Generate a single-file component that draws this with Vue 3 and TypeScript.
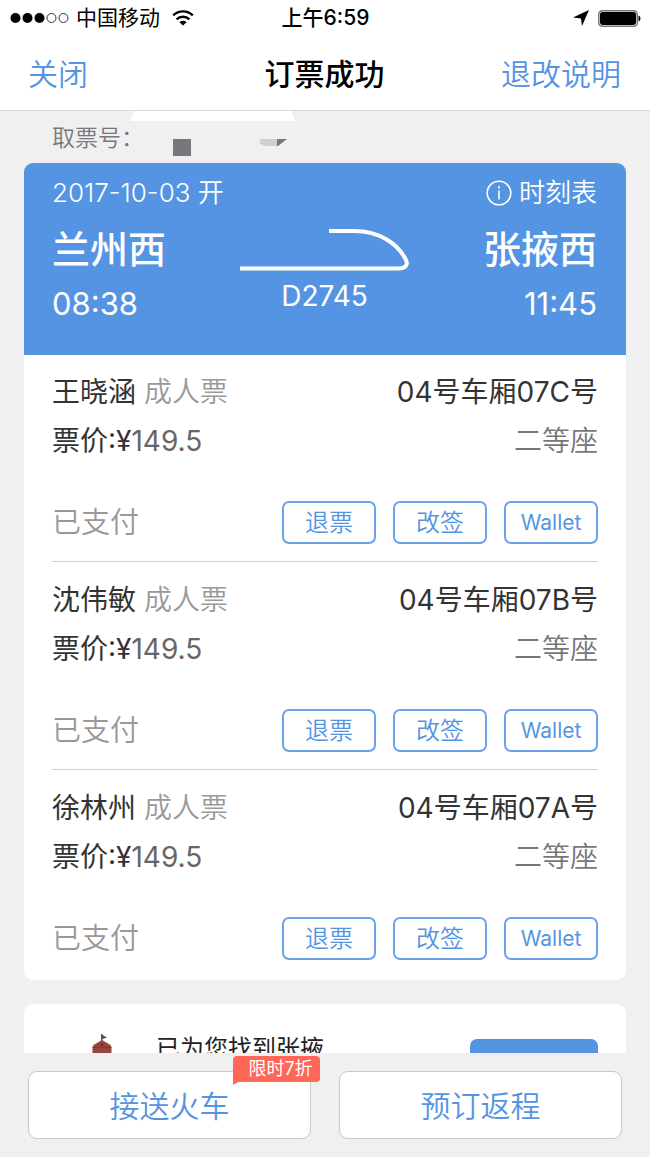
<script setup lang="ts">
interface Ticket {
  name: string
  kind: string
  seat: string
  seatClass: string
  price: string
  status: string
}

const tickets: Ticket[] = [
  { name: '王晓涵', kind: '成人票', seat: '04号车厢07C号', seatClass: '二等座', price: '149.5', status: '已支付' },
  { name: '沈伟敏', kind: '成人票', seat: '04号车厢07B号', seatClass: '二等座', price: '149.5', status: '已支付' },
  { name: '徐林州', kind: '成人票', seat: '04号车厢07A号', seatClass: '二等座', price: '149.5', status: '已支付' },
]
</script>

<template>
  <div class="screen">
    <div class="status">
      <div class="carrier">
        <svg class="signal" width="60" height="12" viewBox="0 0 60 12" aria-hidden="true">
          <circle cx="5.5" cy="6" r="5" />
          <circle cx="17.5" cy="6" r="5" />
          <circle cx="29.5" cy="6" r="5" />
          <circle class="off" cx="41.5" cy="6" r="4.5" />
          <circle class="off" cx="53.5" cy="6" r="4.5" />
        </svg>
        <span>中国移动</span>
        <svg class="wifi" width="22" height="16" viewBox="0 0 22 16" aria-hidden="true">
          <path d="M1.2 5.400a14 14 0 0 1 19.6 0M4.6 9.300a9.2 9.2 0 0 1 12.8 0" />
          <path class="dot" d="M11 15.6 7.4 12.2a5.2 5.2 0 0 1 7.2 0z" />
        </svg>
      </div>
      <span class="clock">上午6:59</span>
      <div class="power">
        <svg width="16" height="16" viewBox="0 0 16 16" aria-hidden="true">
          <path d="M16 0 9 16 8 8.500 0 7.500z" />
        </svg>
        <svg width="43" height="17" viewBox="0 0 43 17" aria-hidden="true">
          <rect class="case" x=".75" y=".75" width="38.5" height="15.5" rx="3.5" />
          <rect x="2" y="2" width="36" height="13" rx="2.4" />
          <path d="M40.5 5.5c2.6.8 2.6 5.2 0 6z" />
        </svg>
      </div>
    </div>

    <header class="nav">
      <button type="button" class="link">关闭</button>
      <h1>订票成功</h1>
      <button type="button" class="link">退改说明</button>
    </header>

    <main class="content">
      <div class="pickup">
        <span>取票号：</span>
        <svg class="mask" width="166" height="48" viewBox="0 0 166 48" aria-hidden="true">
          <path d="M5-1h156l4 11H0z" fill="#fff" />
          <path d="M43 28h18v17H43z" fill="#77777c" />
          <path d="M130 28h17v7h-9q-4 0-8-2z" fill="#d0d0d3" />
          <path d="M147 28h10l-9 7h-1z" fill="#77777c" />
        </svg>
      </div>

      <section class="card">
        <div class="trip">
          <div class="trip-top">
            <span>2017-10-03 开</span>
            <button type="button" class="timetable">
              <svg width="26" height="26" viewBox="0 0 26 26" aria-hidden="true">
                <circle cx="13" cy="13" r="11.8" />
                <path d="M13 10.5v9" />
                <path d="M13 6v2.4" />
              </svg>
              <span>时刻表</span>
            </button>
          </div>
          <div class="route">
            <div class="stop">
              <strong>兰州西</strong>
              <time>08:38</time>
            </div>
            <div class="train">
              <svg width="170" height="44" viewBox="0 0 170 44" aria-hidden="true">
                <path d="M89 3h25C140 3 158 16 166 32c2.500 5-1 8.500-7 8.500H0" />
              </svg>
              <span>D2745</span>
            </div>
            <div class="stop end">
              <strong>张掖西</strong>
              <time>11:45</time>
            </div>
          </div>
        </div>

        <ul class="tickets">
          <li v-for="t in tickets" :key="t.seat" class="ticket">
            <div class="line">
              <span>{{ t.name }} <span class="kind">{{ t.kind }}</span></span>
              <span>{{ t.seat }}</span>
            </div>
            <div class="line">
              <span>票价:¥<span class="price">{{ t.price }}</span></span>
              <span class="class">{{ t.seatClass }}</span>
            </div>
            <div class="actions">
              <span class="paid">{{ t.status }}</span>
              <button type="button">退票</button>
              <button type="button">改签</button>
              <button type="button" class="wallet">Wallet</button>
            </div>
          </li>
        </ul>
      </section>

      <section class="card offer">
        <svg width="20" height="44" viewBox="0 0 20 44" aria-hidden="true">
          <path d="M9 0h1.500v1L15 3.500l-4.500 1.500v3H9z" fill="#62484a" />
          <path d="M10 6 18.500 11l1 2v31H.5V13l1-2z" fill="#954641" />
          <path d="M.5 13.500h19" stroke="#7c3c39" stroke-width="1" />
          <circle cx="10" cy="10.500" r="1.500" fill="#6c3735" />
        </svg>
        <p>已为您找到张掖</p>
        <button type="button" aria-label="查看"></button>
      </section>
    </main>

    <footer class="bar">
      <button type="button">接送火车
        <span class="badge">限时7折</span>
      </button>
      <button type="button">预订返程</button>
    </footer>
  </div>
</template>

<style>
body {
  margin: 0;
}
</style>

<style scoped>
.screen {
  display: flex;
  flex-direction: column;
  height: 100vh;
  background: #f0f0f1;
  color: #333;
  font-family: Inter, "Noto Sans CJK SC", sans-serif;
  font-size: 28px;
}
button {
  font: inherit;
  margin: 0;
  padding: 0;
  border: 0;
  background: none;
  color: #5594e3;
  cursor: pointer;
}
svg {
  display: block;
  flex: none;
}
.status {
  display: grid;
  grid-template-columns: 1fr auto 1fr;
  align-items: center;
  height: 36px;
  padding: 0 9px 0 10px;
  background: #fff;
  color: #000;
  font-size: 21px;
  line-height: 36px;
}
.carrier,
.power {
  display: flex;
  align-items: center;
}
.carrier {
  gap: 6px;
}
.signal .off {
  fill: none;
  stroke: #333;
}
.wifi {
  margin-left: 6px;
}
.wifi path {
  fill: none;
  stroke: #000;
  stroke-width: 2.4;
}
.wifi .dot {
  fill: #000;
  stroke: none;
}
.clock {
  font-weight: 500;
}
.power {
  justify-content: flex-end;
  gap: 9px;
}
.case {
  fill: #fff;
  stroke: #777;
  stroke-width: 1.5;
}
.nav {
  display: grid;
  grid-template-columns: 1fr auto 1fr;
  align-items: center;
  height: 72px;
  padding: 0 29px 2px 28px;
  background: #fff;
  border-bottom: 1px solid #d8d8d8;
  font-size: 30px;
}
.nav h1 {
  margin: 0;
  color: #000;
  font-size: 30px;
  font-weight: 500;
}
.link {
  justify-self: start;
  font-weight: 350;
}
.link:last-child {
  justify-self: end;
}
.content {
  flex: 1;
  min-height: 0;
  overflow: hidden;
  padding: 0 24px;
}
.pickup {
  position: relative;
  height: 52px;
  padding-left: 28px;
  color: #77777c;
  font-size: 23px;
  font-weight: 350;
  line-height: 54px;
}
.mask {
  position: absolute;
  left: 106px;
  top: 0;
}
.card {
  overflow: hidden;
  border-radius: 9px;
  background: #fff;
}
.trip {
  padding: 12px 29px 34px 28px;
  background: #5594e3;
  color: #fff;
}
.trip-top {
  display: flex;
  justify-content: space-between;
  align-items: center;
  height: 36px;
  font-size: 26px;
  font-weight: 350;
  line-height: 36px;
}
.timetable {
  display: flex;
  align-items: center;
  gap: 7px;
  color: #fff;
}
.timetable path,
.timetable circle {
  fill: none;
  stroke: #fff;
  stroke-width: 1.6;
}
.route {
  display: grid;
  grid-template-columns: 1fr 170px 1fr;
}
.stop {
  display: flex;
  flex-direction: column;
}
.stop strong {
  font-size: 38px;
  font-weight: 500;
  line-height: 76px;
}
.stop time {
  font-size: 31px;
  font-weight: 400;
  line-height: 34px;
}
.end {
  align-items: flex-end;
}
.train {
  display: flex;
  flex-direction: column;
  align-items: center;
  padding-top: 17px;
  line-height: 48px;
}
.train path {
  fill: none;
  stroke: #fff;
  stroke-width: 4;
}
.tickets {
  margin: 0;
  padding: 0 28px;
  list-style: none;
}
.ticket {
  padding: 17px 0;
  border-bottom: 1px solid #d0d0d0;
}
.ticket + .ticket {
  padding-top: 18px;
}
.ticket:last-child {
  padding-bottom: 20px;
  border-bottom: 0;
}
.line {
  display: flex;
  justify-content: space-between;
  line-height: 40px;
  margin-bottom: 9px;
}
.kind,
.paid {
  color: #999;
  font-weight: 350;
}
.price {
  color: #666;
}
.class {
  color: #777;
  font-weight: 350;
}
.actions {
  display: flex;
  align-items: center;
  gap: 17px;
  margin-top: 40px;
}
.paid {
  flex: 1;
  font-size: 29px;
  line-height: 43px;
}
.actions button {
  box-sizing: border-box;
  width: 94px;
  height: 43px;
  border: 2px solid #6da3e6;
  border-radius: 7px;
  font-size: 24px;
  font-weight: 350;
  line-height: 38px;
}
.actions .wallet {
  font-size: 21px;
  font-weight: 400;
}
.offer {
  display: flex;
  align-items: flex-start;
  margin-top: 24px;
  padding: 30px 28px 30px 68px;
}
.offer p {
  flex: 1;
  margin: 0 0 0 44px;
  color: #222;
  font-size: 24px;
  line-height: 30px;
}
.offer button {
  width: 128px;
  height: 54px;
  margin-top: 5px;
  border-radius: 7px;
  background: #5594e3;
}
.bar {
  display: flex;
  gap: 28px;
  padding: 18px 28px;
}
.bar button {
  position: relative;
  flex: 1;
  height: 68px;
  padding-bottom: 2px;
  border: 1px solid #c8c8c8;
  border-radius: 9px;
  background: #fff;
  font-size: 30px;
  font-weight: 350;
}
.badge {
  position: absolute;
  right: -10px;
  top: -16px;
  box-sizing: border-box;
  width: 87px;
  height: 26px;
  border-radius: 4px 4px 4px 0;
  padding-left: 8px;
  background: #ff6759;
  color: #fff;
  font-size: 18px;
  font-weight: 400;
  line-height: 26px;
  white-space: nowrap;
}
.badge::after {
  content: "";
  position: absolute;
  left: 0;
  top: 25px;
  border-top: 4px solid #ff6759;
  border-right: 7px solid transparent;
}
</style>
